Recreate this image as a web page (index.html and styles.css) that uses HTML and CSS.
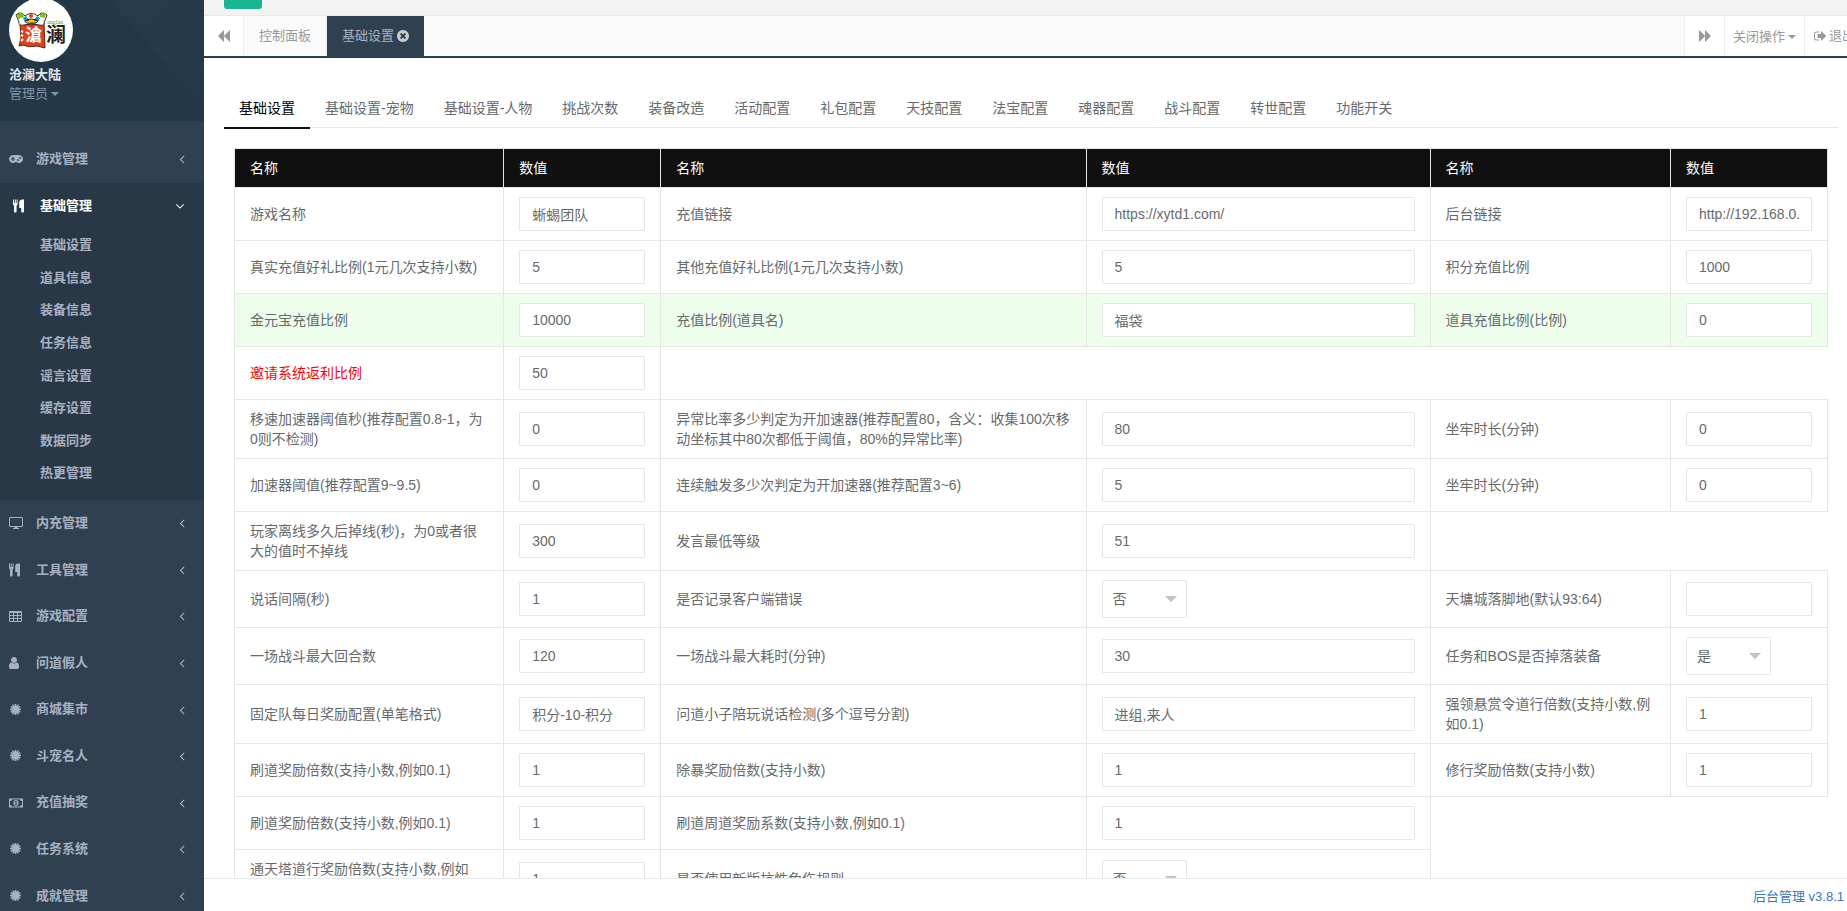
FILE: index.html
```html
<!DOCTYPE html>
<html lang="zh-CN">
<head>
  <meta charset="UTF-8" />
  <meta name="viewport" content="width=device-width, initial-scale=1.0"/>
  <title>后台管理</title>
  <link rel="stylesheet" href="styles.css">
</head>
<body>
  <!-- Icons -->
  <svg class="icon-defs" aria-hidden="true">
    <symbol id="angle-left" viewBox="0 0 1792 1792"><path d="M1203 544q0 13-10 23l-393 393 393 393q10 10 10 23t-10 23l-50 50q-10 10-23 10t-23-10l-466-466q-10-10-10-23t10-23l466-466q10-10 23-10t23 10l50 50q10 10 10 23z"/></symbol>
    <symbol id="angle-down" viewBox="0 0 1792 1792"><path d="M1395 736q0 13-10 23l-466 466q-10 10-23 10t-23-10l-466-466q-10-10-10-23t10-23l50-50q10-10 23-10t23 10l393 393 393-393q10-10 23-10t23 10l50 50q10 10 10 23z"/></symbol>
    <symbol id="user" viewBox="256 0 1792 1792"><path d="M1536 1399q0 109-62.500 187t-150.500 78h-854q-88 0-150.500-78t-62.500-187q0-85 8.500-160.500t31.500-152 58.500-131 94-89 134.500-34.500q131 128 313 128t313-128q76 0 134.500 34.500t94 89 58.500 131 31.500 152 8.500 160.500zm-256-887q0 159-112.500 271.500t-271.500 112.500-271.500-112.500-112.500-271.500 112.500-271.500 271.500-112.500 271.500 112.500 112.500 271.500z"/></symbol>
    <symbol id="times-circle" viewBox="128 128 1536 1536"><path d="M1277 1122q0-26-19-45l-181-181 181-181q19-19 19-45 0-27-19-46l-90-90q-19-19-46-19-26 0-45 19l-181 181-181-181q-19-19-45-19-27 0-46 19l-90 90q-19 19-19 46 0 26 19 45l181 181-181 181q-19 19-19 45 0 27 19 46l90 90q19 19 46 19 26 0 45-19l181-181 181 181q19 19 45 19 27 0 46-19l90-90q19-19 19-46zm387-226q0 209-103 385.500t-279.500 279.500-385.500 103-385.500-103-279.500-279.500-103-385.500 103-385.500 279.500-279.500 385.500-103 385.500 103 279.500 279.500 103 385.500z"/></symbol>
    <symbol id="gamepad" viewBox="0 0 14 14"><path fill-rule="evenodd" d="M4 3h6a4 4 0 1 1-2.700 7h-.6A4 4 0 1 1 4 3zM3.400 5v1.400H2v1.200h1.400V9h1.200V7.600H6V6.400H4.600V5zM9 7.200a.9.9 0 1 0 0 1.800.9.900 0 0 0 0-1.800zm2-2.200a.9.900 0 1 0 0 1.800.9.900 0 0 0 0-1.800z"/></symbol>
    <symbol id="cutlery" viewBox="0 0 14 14"><path d="M0 .5h1V4h.8V.5h1V4h.8V.5h1V5c0 .8-.4 1.300-1 1.600v6c0 .5-.3.900-.8.900h-1c-.5 0-.8-.4-.8-.9v-6C.4 6.300 0 5.800 0 5zM11 .5v12.100c0 .5-.4.900-.9.900h-1c-.5 0-.9-.4-.9-.9V9H6.500c-.2 0-.3-.1-.3-.3V3.500c0-1.700 1.300-3 3-3z"/></symbol>
    <symbol id="desktop" viewBox="0 0 14 14"><path fill-rule="evenodd" d="M1 1h12q1 0 1 1v8q0 1-1 1H8.500v1H10v1H4v-1h1.500v-1H1q-1 0-1-1V2q0-1 1-1zm0 1v8h12V2z"/></symbol>
    <symbol id="table" viewBox="0 0 14 14"><path fill-rule="evenodd" d="M1 2h11q1 0 1 1v9q0 1-1 1H1q-1 0-1-1V3q0-1 1-1zM1 4v2h3V4zm4 0v2h3V4zm4 0v2h3V4zM1 7v2h3V7zm4 0v2h3V7zm4 0v2h3V7zM1 10v2h3v-2zm4 0v2h3v-2zm4 0v2h3v-2z"/></symbol>
    <symbol id="certificate" viewBox="0 0 14 14"><circle cx="6.500" cy="6.500" r="4"/><path fill="none" stroke="currentColor" stroke-width="1.500" d="M6.500 1v11M1 6.500h11M3.700 1.700l5.600 9.600M9.300 1.700l-5.600 9.600M1.700 3.700l9.600 5.600M1.700 9.300l9.600-5.600"/></symbol>
    <symbol id="money" viewBox="0 0 14 14"><path fill-rule="evenodd" d="M0 2.500h14v9H0zm3 1q0 1.500-2 1.500v4q2 0 2 1.500h8Q11 9 13 9V5q-2 0-2-1.500zM7 4a2.600 3 0 0 1 0 6 2.600 3 0 0 1 0-6zm-.4 1-1 .8.4.5.5-.3v2H5.700v.7h2.600V8h-.7V5z"/></symbol>
    <symbol id="forward" viewBox="0 0 12 12"><path d="M0 .7c0-.5.3-.6.600-.3L6 5.700V.7c0-.5.300-.6.600-.3l5.200 5.300q.3.300 0 .6l-5.200 5.300c-.3.300-.6.200-.6-.3v-5L.6 11.600c-.3.300-.6.200-.6-.3z"/></symbol>
    <symbol id="sign-out" viewBox="0 0 12 12"><path d="M5 1.500v1H2.500Q1 2.500 1 4v4q0 1.500 1.500 1.500H5v1H2.500Q0 10.500 0 8V4q0-2.500 2.500-2.500zM7 1.700c0-.5.300-.5.600-.2l4.200 4.100q.3.400 0 .8l-4.200 4.100c-.3.300-.6.300-.6-.2V8H4q-.5 0-.5-.5v-3Q3.500 4 4 4h3z"/></symbol>
  </svg>

  <!-- Sidebar -->
  <div class="sidebar">
    <div class="profile">
      <svg class="avatar" viewBox="0 0 64 64" role="img" aria-label="沧澜">
        <circle cx="32" cy="32" r="32" fill="#fff"/>
        <path d="M11 26q12 2 24-1l1 25-8-2q-8 2-14-1l-4 1 2-8z" fill="#e2401b" stroke="#5b2413"/>
        <path d="M7 17q0-2 6-2l3 3q6-5 13 0l3-3q6 0 6 2l-3 8q1 3-5 2-7-3-15 0-6 1-5-3z" fill="#fff" stroke="#333"/>
        <path d="M8 16l6-1 1 4-6 2zM31 16l6-1-1 5-5-1z" fill="#7ac314"/>
        <path d="M14 20l3-2 3 4-4 2zM28 18l3 2-2 4-4-2z" fill="#1d9ca0"/>
        <circle cx="22" cy="18" r="2" fill="#e2401b"/>
        <path d="M16 23q6-4 13 0-1 3-6 2-6 1-7-2z" fill="#ffc414" stroke="#222"/>
        <circle cx="19" cy="22" r="1" fill="#222"/><circle cx="26" cy="22" r="1" fill="#222"/>
        <text x="16" y="43" class="logo-red">滄</text>
        <path d="M12 33l2 1M12 37l2 1M12 43l2-2" fill="none" stroke="#fff" stroke-width="2"/>
        <text x="37" y="44" class="logo-black">澜</text>
        <text x="38" y="26" class="logo-latin">anglan</text>
      </svg>
      <strong class="profile-name">沧澜大陆</strong>
      <a href="#" class="profile-role">管理员<span class="caret"></span></a>
    </div>

    <ul class="menu">
      <li><a href="#"><svg class="icon"><use href="#gamepad"/></svg><span>游戏管理</span><svg class="arrow"><use href="#angle-left"/></svg></a></li>
      <li class="active">
        <a href="#"><svg class="icon"><use href="#cutlery"/></svg><span>基础管理</span><svg class="arrow"><use href="#angle-down"/></svg></a>
        <ul class="submenu">
          <li><a href="#">基础设置</a></li>
          <li><a href="#">道具信息</a></li>
          <li><a href="#">装备信息</a></li>
          <li><a href="#">任务信息</a></li>
          <li><a href="#">谣言设置</a></li>
          <li><a href="#">缓存设置</a></li>
          <li><a href="#">数据同步</a></li>
          <li><a href="#">热更管理</a></li>
        </ul>
      </li>
      <li><a href="#"><svg class="icon"><use href="#desktop"/></svg><span>内充管理</span><svg class="arrow"><use href="#angle-left"/></svg></a></li>
      <li><a href="#"><svg class="icon"><use href="#cutlery"/></svg><span>工具管理</span><svg class="arrow"><use href="#angle-left"/></svg></a></li>
      <li><a href="#"><svg class="icon"><use href="#table"/></svg><span>游戏配置</span><svg class="arrow"><use href="#angle-left"/></svg></a></li>
      <li><a href="#"><svg class="icon"><use href="#user"/></svg><span>问道假人</span><svg class="arrow"><use href="#angle-left"/></svg></a></li>
      <li><a href="#"><svg class="icon"><use href="#certificate"/></svg><span>商城集市</span><svg class="arrow"><use href="#angle-left"/></svg></a></li>
      <li><a href="#"><svg class="icon"><use href="#certificate"/></svg><span>斗宠名人</span><svg class="arrow"><use href="#angle-left"/></svg></a></li>
      <li><a href="#"><svg class="icon"><use href="#money"/></svg><span>充值抽奖</span><svg class="arrow"><use href="#angle-left"/></svg></a></li>
      <li><a href="#"><svg class="icon"><use href="#certificate"/></svg><span>任务系统</span><svg class="arrow"><use href="#angle-left"/></svg></a></li>
      <li><a href="#"><svg class="icon"><use href="#certificate"/></svg><span>成就管理</span><svg class="arrow"><use href="#angle-left"/></svg></a></li>
    </ul>
  </div>

  <div class="main">
    <div class="topbar">
      <button class="btn-toggle" aria-label="菜单"></button>
    </div>

    <!-- Page tabs -->
    <div class="page-tabs">
      <button class="tab-scroll back" aria-label="向左"><svg><use href="#forward"/></svg></button>
      <div class="tab-list">
        <a href="#">控制面板</a>
        <a href="#" class="active">基础设置<svg><use href="#times-circle"/></svg></a>
      </div>
      <button class="tab-scroll" aria-label="向右"><svg><use href="#forward"/></svg></button>
      <button class="tab-close">关闭操作<span class="caret"></span></button>
      <a href="#" class="logout"><svg><use href="#sign-out"/></svg>退出</a>
    </div>

    <div class="content">
      <div class="setting-tabs">
        <a href="#" class="active">基础设置</a>
        <a href="#">基础设置-宠物</a>
        <a href="#">基础设置-人物</a>
        <a href="#">挑战次数</a>
        <a href="#">装备改造</a>
        <a href="#">活动配置</a>
        <a href="#">礼包配置</a>
        <a href="#">天技配置</a>
        <a href="#">法宝配置</a>
        <a href="#">魂器配置</a>
        <a href="#">战斗配置</a>
        <a href="#">转世配置</a>
        <a href="#">功能开关</a>
      </div>

      <form class="setting-form">
        <table>
          <colgroup>
            <col class="col-name"><col class="col-value"><col class="col-name-wide"><col class="col-value-wide"><col><col class="col-value">
          </colgroup>
          <thead>
            <tr><th>名称</th><th>数值</th><th>名称</th><th>数值</th><th>名称</th><th>数值</th></tr>
          </thead>
          <tbody>
            <tr>
              <td><label for="f1">游戏名称</label></td><td><input type="text" id="f1" value="蜥蜴团队"></td>
              <td><label for="f2">充值链接</label></td><td><input type="text" id="f2" value="https://xytd1.com/"></td>
              <td><label for="f3">后台链接</label></td><td><input type="text" id="f3" value="http://192.168.0."></td>
            </tr>
            <tr>
              <td><label for="f4">真实充值好礼比例(1元几次支持小数)</label></td><td><input type="text" id="f4" value="5"></td>
              <td><label for="f5">其他充值好礼比例(1元几次支持小数)</label></td><td><input type="text" id="f5" value="5"></td>
              <td><label for="f6">积分充值比例</label></td><td><input type="text" id="f6" value="1000"></td>
            </tr>
            <tr class="highlight">
              <td><label for="f7">金元宝充值比例</label></td><td><input type="text" id="f7" value="10000"></td>
              <td><label for="f8">充值比例(道具名)</label></td><td><input type="text" id="f8" value="福袋"></td>
              <td><label for="f9">道具充值比例(比例)</label></td><td><input type="text" id="f9" value="0"></td>
            </tr>
            <tr>
              <td class="warn"><label for="f10">邀请系统返利比例</label></td><td><input type="text" id="f10" value="50"></td>
            </tr>
            <tr>
              <td><label for="f11">移速加速器阈值秒(推荐配置0.8-1，为0则不检测)</label></td><td><input type="text" id="f11" value="0"></td>
              <td><label for="f12">异常比率多少判定为开加速器(推荐配置80，含义：收集100次移动坐标其中80次都低于阈值，80%的异常比率)</label></td><td><input type="text" id="f12" value="80"></td>
              <td><label for="f13">坐牢时长(分钟)</label></td><td><input type="text" id="f13" value="0"></td>
            </tr>
            <tr>
              <td><label for="f14">加速器阈值(推荐配置9~9.5)</label></td><td><input type="text" id="f14" value="0"></td>
              <td><label for="f15">连续触发多少次判定为开加速器(推荐配置3~6)</label></td><td><input type="text" id="f15" value="5"></td>
              <td><label for="f16">坐牢时长(分钟)</label></td><td><input type="text" id="f16" value="0"></td>
            </tr>
            <tr>
              <td><label for="f17">玩家离线多久后掉线(秒)，为0或者很大的值时不掉线</label></td><td><input type="text" id="f17" value="300"></td>
              <td><label for="f18">发言最低等级</label></td><td><input type="text" id="f18" value="51"></td>
            </tr>
            <tr>
              <td><label for="f19">说话间隔(秒)</label></td><td><input type="text" id="f19" value="1"></td>
              <td><label for="f20">是否记录客户端错误</label></td><td><div class="select-box"><select id="f20"><option>否</option><option>是</option></select></div></td>
              <td><label for="f21">天墉城落脚地(默认93:64)</label></td><td><input type="text" id="f21" value=""></td>
            </tr>
            <tr>
              <td><label for="f22">一场战斗最大回合数</label></td><td><input type="text" id="f22" value="120"></td>
              <td><label for="f23">一场战斗最大耗时(分钟)</label></td><td><input type="text" id="f23" value="30"></td>
              <td><label for="f24">任务和BOS是否掉落装备</label></td><td><div class="select-box"><select id="f24"><option>是</option><option>否</option></select></div></td>
            </tr>
            <tr>
              <td><label for="f25">固定队每日奖励配置(单笔格式)</label></td><td><input type="text" id="f25" value="积分-10-积分"></td>
              <td><label for="f26">问道小子陪玩说话检测(多个逗号分割)</label></td><td><input type="text" id="f26" value="进组,来人"></td>
              <td><label for="f27">强领悬赏令道行倍数(支持小数,例如0.1)</label></td><td><input type="text" id="f27" value="1"></td>
            </tr>
            <tr>
              <td><label for="f28">刷道奖励倍数(支持小数,例如0.1)</label></td><td><input type="text" id="f28" value="1"></td>
              <td><label for="f29">除暴奖励倍数(支持小数)</label></td><td><input type="text" id="f29" value="1"></td>
              <td><label for="f30">修行奖励倍数(支持小数)</label></td><td><input type="text" id="f30" value="1"></td>
            </tr>
            <tr>
              <td><label for="f31">刷道奖励倍数(支持小数,例如0.1)</label></td><td><input type="text" id="f31" value="1"></td>
              <td><label for="f32">刷道周道奖励系数(支持小数,例如0.1)</label></td><td><input type="text" id="f32" value="1"></td>
            </tr>
            <tr>
              <td><label for="f33">通天塔道行奖励倍数(支持小数,例如0.1)</label></td><td><input type="text" id="f33" value="1"></td>
              <td><label for="f34">是否使用新版抗性免伤规则</label></td><td><div class="select-box"><select id="f34"><option>否</option><option>是</option></select></div></td>
            </tr>
          </tbody>
        </table>
      </form>
    </div>

    <!-- Footer -->
    <div class="footer">
      <a href="#">后台管理 v3.8.1</a>
    </div>
  </div>
</body>
</html>
```
FILE: styles.css
```css
* {
    box-sizing: border-box;
}

body {
    font-family: "Liberation Sans", "Noto Sans CJK SC", sans-serif;
    font-size: 13px;
    line-height: 1.43;
    color: #676a6c;
    margin: 0;
    height: 100vh;
    display: flex;
    overflow: hidden;
    background: #fff;
}

a {
    text-decoration: none;
    color: inherit;
}

ul {
    list-style: none;
    margin: 0;
    padding: 0;
}

button, input, select {
    font-family: inherit;
    color: inherit;
}

svg {
    fill: currentColor;
}

.icon-defs {
    display: none;
}

.caret {
    display: inline-block;
    margin-left: 3px;
    vertical-align: middle;
    border-top: 4px solid;
    border-left: 4px solid transparent;
    border-right: 4px solid transparent;
}

/* Sidebar */
.sidebar {
    width: 204px;
    flex-shrink: 0;
    overflow: hidden;
    background: #2f4050;
    color: #a7b1c2;
}

.profile {
    display: flex;
    flex-direction: column;
    align-items: flex-start;
    margin-top: -20px;
    padding: 18px 9px;
    background: linear-gradient(48deg, #243747 66%, transparent 66%), linear-gradient(135deg, #293c4b, #253848);
}

.avatar {
    width: 64px;
    height: 64px;
}

.logo-red {
    font-size: 17px;
    font-weight: bold;
    fill: #fff;
}

.logo-black {
    font-size: 20px;
    font-weight: bold;
    fill: #222;
}

.logo-latin {
    font-family: "Liberation Serif", serif;
    font-size: 6px;
    fill: #3a9a3a;
}

.profile-name {
    margin-top: 4px;
    color: #dfe4ed;
}

.profile-role {
    color: #8095a8;
}

.menu {
    padding-top: 15px;
    font-weight: 600;
}

.menu > li > a {
    display: flex;
    align-items: center;
    padding: 14px 15px 14px 9px;
}

.menu > li.active {
    background: #293846;
    padding-bottom: 10px;
}

.menu > li.active > a {
    color: #fff;
    padding-left: 13px;
    padding-right: 17px;
}

.icon {
    width: 14px;
    height: 14px;
    margin-right: 13px;
}

.arrow {
    width: 14px;
    height: 14px;
    margin-left: auto;
}

.submenu a {
    display: block;
    padding: 7px 10px 7px 40px;
}

/* Main column */
.main {
    flex: 1;
    min-width: 0;
    display: flex;
    flex-direction: column;
}

.topbar {
    display: flex;
    flex-shrink: 0;
    margin-top: -20px;
    padding: 0 20px 6px;
    background: #f3f3f4;
    border-bottom: 1px solid #e7eaec;
}

.btn-toggle {
    width: 38px;
    height: 29px;
    border: none;
    border-radius: 3px;
    background: #1ab394;
}

/* Page tabs */
.page-tabs {
    display: flex;
    flex-shrink: 0;
    height: 42px;
    line-height: 38px;
    color: #999;
    background: #fafafa;
    border-bottom: 2px solid #2f4050;
}

.page-tabs svg {
    width: 12px;
    height: 12px;
}

.page-tabs button {
    padding: 0;
    border: none;
    border-left: 1px solid #eee;
    background: #fff;
    font-size: 13px;
}

.page-tabs .tab-scroll {
    display: flex;
    align-items: center;
    justify-content: center;
    width: 40px;
}

.page-tabs .back {
    border-left: none;
    border-right: 1px solid #eee;
}

.back svg {
    transform: rotate(180deg);
}

.tab-list {
    display: flex;
    flex: 1;
}

.tab-list a {
    display: flex;
    align-items: center;
    padding: 0 15px;
    border-right: 1px solid #eee;
}

.tab-list a.active {
    color: #a7b1c2;
    background: #2f4050;
    border-right: none;
}

.tab-list svg {
    margin-left: 3px;
    fill: #ccc;
}

.page-tabs .tab-close {
    width: 80px;
    padding-bottom: 2px;
}

.logout {
    display: flex;
    align-items: center;
    gap: 3px;
    width: 43px;
    padding-left: 9px;
    overflow: hidden;
    white-space: nowrap;
    background: #fff;
    border-left: 1px solid #eee;
}

.logout svg {
    flex-shrink: 0;
}

/* Content */
.content {
    flex: 1;
    min-height: 0;
    overflow: hidden;
    padding: 30px 9px 0 20px;
    font-size: 14px;
}

.setting-tabs {
    display: flex;
    height: 40px;
    line-height: 40px;
    border-bottom: 1px solid #e6e6e6;
}

.setting-tabs a {
    position: relative;
    padding: 0 15px;
    white-space: nowrap;
}

.setting-tabs a.active {
    color: #000;
}

.setting-tabs a.active::after {
    content: "";
    position: absolute;
    left: 0;
    right: 0;
    bottom: -2px;
    height: 2px;
    background: #101010;
}

.setting-form {
    padding: 20px 10px;
}

/* Settings table */
table {
    width: 100%;
    table-layout: fixed;
    border-collapse: collapse;
    line-height: 20px;
}

.col-name {
    width: 16.9%;
}

.col-value {
    width: 157px;
}

.col-name-wide {
    width: 26.7%;
}

.col-value-wide {
    width: 21.6%;
}

th, td {
    padding: 9px 15px;
    text-align: left;
    border: 1px solid #e6e6e6;
}

th {
    font-weight: normal;
    color: #fff;
    background: #101010;
}

.highlight {
    background: #edffec;
}

.warn {
    color: red;
}

input {
    display: block;
    width: 100%;
    height: 34px;
    padding: 6px 12px;
    font-size: 14px;
    background: #fff;
    border: 1px solid #e5e6e7;
    border-radius: 1px;
}

.select-box {
    position: relative;
    width: 85px;
}

.select-box::after {
    content: "";
    position: absolute;
    right: 10px;
    top: 16px;
    border-top: 6px solid #c2c2c2;
    border-left: 6px solid transparent;
    border-right: 6px solid transparent;
    pointer-events: none;
}

select {
    display: block;
    width: 100%;
    height: 38px;
    padding: 0 10px;
    font-size: 14px;
    appearance: none;
    background: #fff;
    border: 1px solid #e6e6e6;
    border-radius: 2px;
}

/* Footer */
.footer {
    flex-shrink: 0;
    height: 33px;
    padding: 9px 3px 0;
    text-align: right;
    color: #337ab7;
    border-top: 1px solid #e7eaec;
}
```
